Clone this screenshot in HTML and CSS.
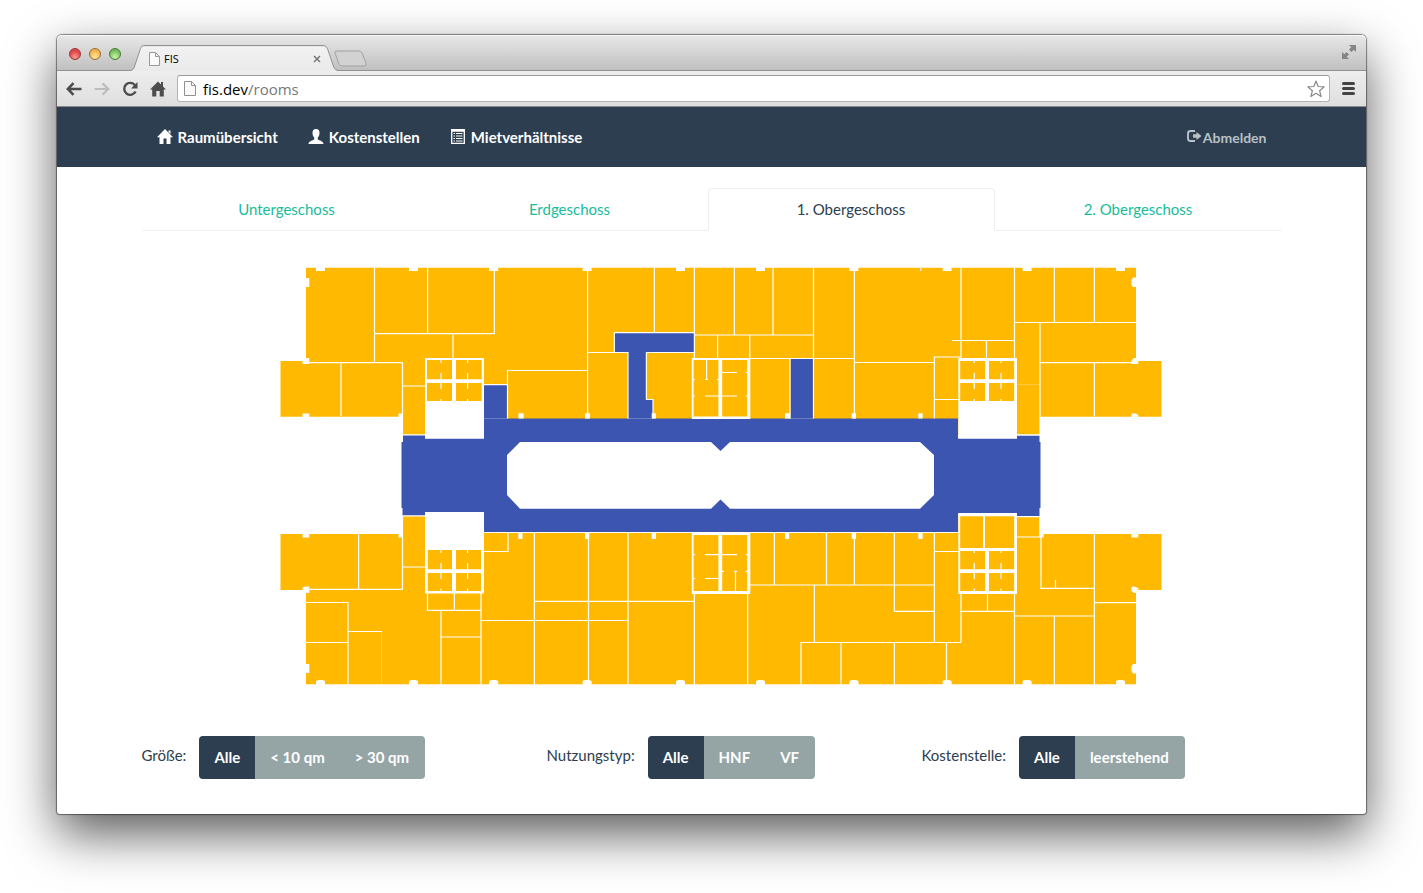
FILE: index.html
```html
<!DOCTYPE html>
<html lang="de">
<head>
<meta charset="utf-8">
<title>FIS</title>
<link rel="stylesheet" href="styles.css">
</head>
<body>
<div class="window">
  <div class="titlebar">
    <div class="lights">
      <button class="light light-red" aria-label="Schließen"></button>
      <button class="light light-yellow" aria-label="Minimieren"></button>
      <button class="light light-green" aria-label="Maximieren"></button>
    </div>
    <div class="browser-tab">
      <svg class="tab-shape" width="206" height="26" viewBox="0 0 206 26" aria-hidden="true">
        <defs><linearGradient id="tabfill" x1="0" y1="0" x2="0" y2="1"><stop offset="0" stop-color="#f2f2f2"/><stop offset="1" stop-color="#eaeaea"/></linearGradient></defs>
        <path d="M0 25.500C2.500 25.500 3 23 4 20L9 5C10.500 1.500 11 1.500 14 1.500H191C194 1.500 195.500 2 197 5L202 20C203 23 204 25.500 206 25.500V26H0Z" fill="url(#tabfill)"/>
        <path d="M0 25C2.500 25 3 23 4 20L9 5C10.500 1 11 .5 14 .5H191C194 .5 195.500 1 197 5L202 20C203 23 204 25 206 25" fill="none" stroke="#929292"/>
      </svg>
      <div class="tab-content">
        <svg width="11" height="14" viewBox="0 0 11 14" aria-hidden="true"><path d="M.5.5H6.500L10.500 4.500V13.500H.5ZM6.500.5V4.500H10.500" fill="#fafafa" stroke="#999"/></svg>
        <span class="tab-title">FIS</span>
        <button class="tab-close" aria-label="Tab schließen"><svg width="8" height="8" viewBox="0 0 8 8"><path d="M1 1L7 7M7 1L1 7" stroke="#777" stroke-width="1.500"/></svg></button>
      </div>
    </div>
    <button class="new-tab" aria-label="Neuer Tab"><svg width="34" height="17" viewBox="0 0 34 17"><path d="M3 1H25Q27 1 28 3L32 13Q33 16 30 16H9Q6 16 5 14L1 3Q.5 1 3 1Z" fill="#d2d2d2" stroke="#a2a2a2"/></svg></button>
    <button class="fullscreen" aria-label="Vollbild"><svg width="14" height="14" viewBox="0 0 14 14" fill="#858585"><path d="M7 0H14V7L11.700 4.700L9.500 7L7 4.500L9.300 2.300ZM0 7L2.300 9.300L4.500 7L7 9.500L4.700 11.700L7 14H0Z"/></svg></button>
  </div>
  <div class="toolbar">
    <button class="tool" aria-label="Zurück"><svg width="16" height="14" viewBox="0 0 16 14" fill="none" stroke="#4d4d4d" stroke-width="2.500"><path d="M15.500 7H2M7.500 1.200L1.800 7L7.500 12.800"/></svg></button>
    <button class="tool" aria-label="Vorwärts"><svg width="16" height="14" viewBox="0 0 16 14" fill="none" stroke="#bdbdbd" stroke-width="2.200"><path d="M.5 7H14M8.500 1.200L14.200 7L8.500 12.800"/></svg></button>
    <button class="tool" aria-label="Neu laden"><svg width="16" height="16" viewBox="0 0 16 16"><path d="M13 4.200A6 6 0 1 0 13.600 10.500" fill="none" stroke="#4d4d4d" stroke-width="2.400"/><path d="M15.500 1V7.500H9Z" fill="#4d4d4d"/></svg></button>
    <button class="tool" aria-label="Startseite"><svg width="16" height="16" viewBox="0 0 16 16" fill="#4d4d4d"><path d="M8 .5L11 3.500V1H13V5.500L16 8.500H13.800V15.500H9.700V10H6.300V15.500H2.200V8.500H0Z"/></svg></button>
    <div class="address">
      <svg width="12" height="15" viewBox="0 0 12 15" aria-hidden="true"><path d="M.5.5H7.500L11.500 4.500V14.500H.5ZM7.500.5V4.500H11.500" fill="#fafafa" stroke="#909090"/></svg>
      <p class="url">fis.dev<span class="path">/rooms</span></p>
      <button class="star" aria-label="Lesezeichen"><svg width="18" height="18" viewBox="0 0 18 18"><path d="M9 1L11.200 6.500L17.200 6.900L12.600 10.700L14.100 16.600L9 13.300L3.900 16.600L5.400 10.700L.8 6.900L6.800 6.500Z" fill="#fff" stroke="#888" stroke-width="1.200" stroke-linejoin="round"/></svg></button>
    </div>
    <button class="menu" aria-label="Menü"><svg width="13" height="13" viewBox="0 0 13 13"><path d="M1.500 1.500H11.500M1.500 6.500H11.500M1.500 11.500H11.500" stroke="#444" stroke-width="3" stroke-linecap="round"/></svg></button>
  </div>

  <nav class="navbar">
    <div class="container nav-row">
      <a class="nav-link" href="#"><svg class="nav-icon" width="16" height="15" viewBox="0 0 16 15" fill="#fff"><path d="M8 0L16 8.200H13.500V15H9.500V9.500H6.500V15H2.500V8.200H0ZM11.500 1.500H13.500V5L11.500 3Z"/></svg>Raumübersicht</a>
      <a class="nav-link" href="#"><svg class="nav-icon" width="16" height="15" viewBox="0 0 16 15" fill="#fff"><path d="M8 0C10.500 0 11.500 1.500 11.500 4C11.500 6 10.700 7.500 9.800 8.500V10.500C11 11.500 15.500 12 15.500 15H.5C.5 12 5 11.500 6.200 10.500V8.500C5.300 7.500 4.500 6 4.500 4C4.500 1.500 5.500 0 8 0Z"/></svg>Kostenstellen</a>
      <a class="nav-link" href="#"><svg class="nav-icon" width="16" height="15" viewBox="0 0 16 15"><path d="M1.700.7H14.300V14.300H1.700ZM1.700 2H14.300" fill="none" stroke="#fff" stroke-width="1.300"/><path d="M3.500 4.500H5M6 4.500H12.500M3.500 7H5M6 7H12.500M3.500 9.500H5M6 9.500H12.500M3.500 12H5M6 12H12.500" stroke="#fff" stroke-width="1.200"/></svg>Mietverhältnisse</a>
      <a class="nav-link logout" href="#"><svg class="nav-icon" width="16" height="14" viewBox="0 0 16 14"><path d="M9 2H4.500Q2 2 2 4.500V9.500Q2 12 4.500 12H9" fill="none" stroke="currentColor" stroke-width="1.900"/><path d="M10.500 3L15.500 7L10.500 11V8.800H7V5.200H10.500Z" fill="currentColor"/></svg>Abmelden</a>
    </div>
  </nav>

  <main class="container">
    <div class="floors">
      <a class="floor" href="#">Untergeschoss</a>
      <a class="floor" href="#">Erdgeschoss</a>
      <a class="floor active" href="#" aria-current="page">1. Obergeschoss</a>
      <a class="floor" href="#">2. Obergeschoss</a>
    </div>

    <svg class="plan" viewBox="142 231 1140 505" role="img" aria-label="Grundriss 1. Obergeschoss">
      <g class="room">
        <path d="M306 267.700H1136V361H1161.500V416.700H1040V435H402.500V416.700H280.500V361H306Z"/>
        <path d="M402.500 516H1040V534H1161.500V590H1136V684.300H306V590H280.500V534H402.500Z"/>
      </g>
      <g class="hall">
        <path fill-rule="evenodd" d="M403 435H425V438.500H484V418.500H958V438.500H1017V435.500H1039.500V442H1040.500V508H1039.500V516.500H1017V513.500H958V532H484V512H425V515.500H402.500V508H401.500V442H403ZM520 442H711L720.500 451L730 442H920L934 455V495L920 508.700H730L720.500 499.500L711 508.700H520L507 495V455Z"/>
        <path d="M484 385H507.500V419H484ZM614.500 333H694V352.500H646.500V399.500H653V419H628V352.500H614.500ZM790.500 358.500H814V419H790.500Z"/>
      </g>
      <path class="wall" d="M374.500 268V362.500M374.500 333.700H494.500M427.600 268V333.700M494.400 268V333.700M453 333.700V358M306 362.600H402.500M341 362.600V416M402.500 362.600V435M402.500 386H425M402.500 434.800H425
        M587.600 268V418.500M484 384.600H507.500M507.500 418.500V370.500H587.600M654.400 268V332.600M694.400 268V358M694.400 332.600H614.400V352.500M587.600 352.500H628V418.500M694 352.500H646.400V399.500H653V418.500M694.400 335H813.500
        M734.400 268V335M773 268V335M813.500 268V418.500M717.600 335V358M749.800 335V358M750 358.500H854M790 358.500V418.500M854.400 268V418.500M854.400 362.500H934.400
        M920.800 268V271M961 268V358M1014.500 268V358M1054.400 268V322.500M1094.400 268V322.500M1014.500 322.500H1136M952 340.500H1014.500M986.500 340.500V358M961 357H934.400V418.500M934.400 399.500H958M1040 322.500V435M1040 362.600H1136M1094.400 362.600V416.500M1017 434.800H1040
        M402.500 516V589.400M402.500 516H425M402.500 567H425M358.600 534V589.400M306 589.400H402.500M306 602.500H348V684M306 642.500H348M348 631.500H382M427.500 593V610.400H481M454.400 593V610.400M441 610.400V684M441 637H481M481 593V684
        M484 551.500H508V533M534.400 533V684M588.500 533V684M628 533V684M534.400 601.400H694.400M481 620.500H628M694.400 594V684M747.700 594V684M774.400 533V585M826.500 533V585M854.400 533V585M894.400 533V611.400H934.400M750 585H934.400M814.400 585V642.500M961 642.500H801V684M841 642.500V684M894.400 642.500V684
        M934.400 533V642.500M934.400 551.500H958M961 594V642.500M961 611.400H1014.500M987.500 594V611.400M1014.500 594V684M946.500 642.500V684M1017 537H1041V588.300H1094.400M1017 516.700H1040M1039.800 516V537M1055.500 580V588M1094.400 534V684M1094.400 602.600H1136M1014.500 616H1094.400M1054.400 616V684M484 532.500H958"/>
      <path class="wall faint" d="M381.500 631.500V684M1017 384.500H1040M484 418.500H507M628 418.500H653M790 418.500H814"/>
      <g class="void">
        <path d="M425 358H484V438.500H425ZM958.300 358H1017V438.500H958.300ZM425 512H484V593.500H425ZM958.300 513H1017V594H958.300ZM691.800 358H750.300V419H691.800ZM691.800 532.500H750.300V594H691.800Z"/>
        <path d="M316 267H325V271H316ZM409 267H418V271H409ZM489.200 267H498.200V271H489.200ZM582.600 267H591.600V271H582.600ZM676 267H685V271H676ZM756 267H765V271H756ZM849.400 267H858.400V271H849.400ZM942.600 267H951.600V271H942.600ZM1022.600 267H1031.600V271H1022.600ZM1116 267H1125V271H1116Z"/>
        <path d="M316 685V681L318.500 680H322.500L325 681V685ZM409 685V681L411.500 680H415.500L418 681V685ZM489.200 685V681L491.700 680H495.700L498.200 681V685ZM582.600 685V681L585 680H589L591.600 681V685ZM676 685V681L678.500 680H682.500L685 681V685ZM756 685V681L758.500 680H762.500L765 681V685ZM849.400 685V681L852 680H856L858.400 681V685ZM942.600 685V681L945 680H949L951.600 681V685ZM1022.600 685V681L1025 680H1029L1031.600 681V685ZM1116 685V681L1118.500 680H1122.500L1125 681V685Z"/>
        <path d="M305 278H309.300V287H305ZM305 664H309.300V673H305ZM302.500 361H305V358H309.300V364H302.500ZM302.500 413.500H309.300V418H302.500ZM398.500 413.500H402V418H398.500ZM302.500 533H309.300V537.500H302.500ZM398.500 533H402V537.500H398.500ZM302.500 587.500L305 586.500H309.300V593H305V590.500H302.500Z"/>
        <path d="M1137 277.500H1133L1131.500 280V285L1133 287H1137ZM1137 664H1133L1131.500 666.500V671L1133 673.500H1137ZM1131.500 360.500L1134 358H1137V361H1138.300V364H1131.500ZM1131.500 418V413.500H1136L1138.300 415V418ZM1131.500 533H1138.300V537.500H1131.500ZM1131.500 587L1134 586.500L1138.300 588V590.500H1137V593H1134L1131.500 591ZM1040 533H1043.700V537.500H1040Z"/>
        <path d="M518.500 413.300H523.600V418.500H518.500ZM585 413.300H590V418.500H585ZM651.700 413.300H656V418.500H651.700ZM785 413.300H790V418.500H785ZM851.700 413.300H856V418.500H851.700ZM918.300 413.300H922.600V418.500H918.300ZM518.300 532.500H522.500V539H518.300ZM585 532.500H589.200V539H585ZM651.700 532.500H656V539H651.700ZM785 532.500H789.200V539H785ZM851.700 532.500H856V539H851.700ZM918.300 532.500H922.600V539H918.300Z"/>
      </g>
      <g class="room">
        <path d="M427 360H452V379.300H427ZM456 360H481.700V379.300H456ZM427 383H452V401H427ZM456 383H481.700V401H456Z"/>
        <path d="M960.200 361H985.200V379.300H960.200ZM989 361H1014.200V379.300H989ZM960.200 383H985.200V401H960.200ZM989 383H1014.200V401H989Z"/>
        <path d="M427.800 550H452V569.200H427.800ZM456 550H481V569.200H456ZM427.800 573H452V591H427.800ZM456 573H481V591H456Z"/>
        <path d="M960.200 516.200H983V548H960.200ZM985 516.200H1014.200V548H985ZM960.200 551H985.200V569.200H960.200ZM989 551H1014.200V569.200H989ZM960.200 573H985.200V591H960.200ZM989 573H1014.200V591H989Z"/>
        <path d="M693.600 360H718.400V416.500H693.600ZM722.200 360H747.200V416.500H722.200ZM693.600 535H718.400V591H693.600ZM722.200 535H747.200V591H722.200Z"/>
      </g>
      <path class="wall" d="M441 360V363M441 373V379M441 383V389M441 399V401M467.600 360V363M467.600 373V379M467.600 383V389M467.600 399V401M974.300 361V363M974.300 373V379M974.300 383V389M974.300 399V401M1001 361V363M1001 373V379M1001 383V389M1001 399V401
        M441 550V553M441 563V569M441 573V579M441 588.500V591M467.600 550V553M467.600 563V569M467.600 573V579M467.600 588.500V591M974.300 551V553M974.300 563V569M974.300 573V579M974.300 588.500V591M1001 551V553M1001 563V569M1001 573V579M1001 588.500V591
        M706.600 360V379.500M705 379.500H708M717 379.500H719M693.600 379.500H695M722 372.500H737M746 372.500H748M705 396H737M693.600 396H695M746 396H748
        M705 554.600H737M693.600 554.600H695M746 554.600H748M705 578.500H718.400M693.600 578.500H695M735.500 571.400V591M734 571.400H737M746 571.400H748M722 571.400H724"/>
    </svg>

    <div class="filters">
      <div class="filter" role="group" aria-labelledby="f-size">
        <span class="filter-label" id="f-size">Größe:</span>
        <div class="btn-group"><button class="btn active" aria-pressed="true">Alle</button><button class="btn">&lt; 10 qm</button><button class="btn">&gt; 30 qm</button></div>
      </div>
      <div class="filter filter-type" role="group" aria-labelledby="f-type">
        <span class="filter-label" id="f-type">Nutzungstyp:</span>
        <div class="btn-group"><button class="btn active" aria-pressed="true">Alle</button><button class="btn">HNF</button><button class="btn">VF</button></div>
      </div>
      <div class="filter" role="group" aria-labelledby="f-cost">
        <span class="filter-label" id="f-cost">Kostenstelle:</span>
        <div class="btn-group"><button class="btn active" aria-pressed="true">Alle</button><button class="btn">leerstehend</button></div>
      </div>
    </div>
  </main>
</div>
</body>
</html>
```
FILE: styles.css
```css
* { box-sizing: border-box; }
body {
  margin: 0;
  min-height: 100vh;
  padding: 35px 57px 79px;
  background: #fff;
  color: #2c3e50;
  font: 15px/21px Lato, sans-serif;
  display: flex;
  overflow-x: hidden;
}
button {
  border: 0;
  padding: 0;
  background: none;
  font: inherit;
  color: inherit;
}
a { text-decoration: none; }
svg { display: block; flex: none; }

.window {
  flex: 1;
  min-width: 0;
  background: #fff;
  border-radius: 5px 5px 3px 3px;
  box-shadow: 0 0 1px 1px rgba(0, 0, 0, .45), 0 20px 50px rgba(0, 0, 0, .65);
}

/* browser frame */
.titlebar {
  display: flex;
  align-items: flex-end;
  height: 36px;
  padding: 0 10px 0 12px;
  border-bottom: 1px solid #929292;
  border-radius: 5px 5px 0 0;
  background: linear-gradient(#e8e8e8, #c0c0c0);
  box-shadow: inset 0 1px #f7f7f7;
}
.lights {
  display: flex;
  gap: 8px;
  margin: 0 10px 10px 0;
}
.light {
  width: 12px;
  height: 12px;
  border: 1px solid #555;
  border-radius: 50%;
}
.light-red { background: radial-gradient(circle at 50% 80%, #ff9a94, #e0464a 60%, #d9474a); border-color: #93383b; }
.light-yellow { background: radial-gradient(circle at 50% 80%, #ffe79a, #f3b04c 70%); border-color: #9a6a31; }
.light-green { background: radial-gradient(circle at 50% 80%, #cbf3a6, #74bb5a 70%); border-color: #47793a; }
.browser-tab {
  display: grid;
  width: 206px;
  margin-bottom: -1px;
}
.tab-shape, .tab-content { grid-area: 1 / 1; }
.tab-content {
  display: flex;
  align-items: center;
  padding: 2px 16px 0 18px;
}
.tab-title {
  flex: 1;
  padding-left: 4px;
  color: #000;
  font: 11px/16px "Open Sans", sans-serif;
}
.new-tab { margin: 0 0 3px -3px; }
.fullscreen { margin: 0 0 11px auto; }
.toolbar {
  display: flex;
  align-items: center;
  gap: 12px;
  height: 36px;
  padding: 0 11px 0 9px;
  border-bottom: 1px solid #8c8c8c;
  background: linear-gradient(#eee, #dedede);
}
.address {
  display: flex;
  flex: 1;
  align-items: center;
  gap: 7px;
  height: 27px;
  margin-left: -1px;
  padding: 0 4px 0 6px;
  border: 1px solid #b3b3b3;
  border-top-color: #999;
  border-radius: 3px;
  background: #fff;
}
.url {
  flex: 1;
  margin: 0;
  color: #000;
  font: 15px/20px "Open Sans", sans-serif;
}
.path { color: #777; }

/* page */
.container {
  width: 100%;
  max-width: 1170px;
  margin: 0 auto;
  padding: 0 15px;
}
.navbar { background: #2c3e50; }
.nav-row { display: flex; min-height: 60px; }
.nav-link {
  display: flex;
  align-items: center;
  gap: 5px;
  padding: 0 15px;
  color: #fff;
  font-weight: 700;
}
.nav-icon { margin-bottom: 2px; }
.logout {
  gap: 1px;
  margin-left: auto;
  color: #b9c0c7;
  font-size: 14px;
}
.floors {
  display: grid;
  grid-template-columns: 290fr 276fr 287fr 287fr;
  margin-top: 21px;
}
.floor {
  padding: 10px 15px;
  border: 1px solid transparent;
  border-bottom-color: #ecf0f1;
  color: #18bc9c;
  text-align: center;
}
.floor.active {
  border-color: #ecf0f1;
  border-bottom-color: transparent;
  border-radius: 4px 4px 0 0;
  color: #2c3e50;
}
.plan { width: 100%; height: auto; }
.room { fill: #ffb900; }
.hall { fill: #3c55b0; }
.void { fill: #fff; }
.wall { fill: none; stroke: #fff; stroke-width: 1.2; }
.faint { opacity: .25; }
.filters {
  display: grid;
  grid-template-columns: repeat(3, 1fr);
  gap: 30px;
  padding-bottom: 35px;
}
.filter { display: flex; gap: 13px; }
.filter-type { padding-left: 15px; }
.filter-label { padding-top: 9px; }
.btn-group { display: flex; }
.btn {
  height: 43px;
  padding: 0 15px;
  background: #95a5a6;
  color: #fff;
  font-weight: 700;
}
.btn:first-child { border-radius: 4px 0 0 4px; }
.btn:last-child { padding-right: 16px; border-radius: 0 4px 4px 0; }
.btn.active { background: #2c3e50; }
```
